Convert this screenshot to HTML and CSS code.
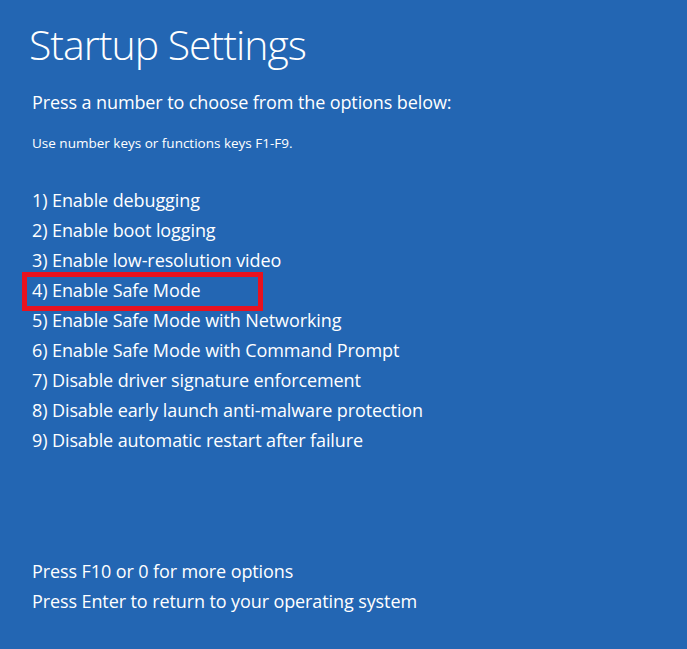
FILE: index.html
```html
<!DOCTYPE html>
<html lang="en">
<head>
  <meta charset="UTF-8">
  <title>Startup Settings</title>
  <link rel="stylesheet" href="styles.css">
</head>
<body>
  <div class="screen">
    <h1 class="title">Startup Settings</h1>
    <p class="lead">Press a number to choose from the options below:</p>
    <p class="hint">Use number keys or functions keys F1-F9.</p>

    <ul class="options">
      <li>1) Enable debugging</li>
      <li>2) Enable boot logging</li>
      <li>3) Enable low-resolution video</li>
      <li class="picked">4) Enable Safe Mode</li>
      <li>5) Enable Safe Mode with Networking</li>
      <li>6) Enable Safe Mode with Command Prompt</li>
      <li>7) Disable driver signature enforcement</li>
      <li>8) Disable early launch anti-malware protection</li>
      <li>9) Disable automatic restart after failure</li>
    </ul>

    <div class="footer">
      <p>Press F10 or 0 for more options</p>
      <p>Press Enter to return to your operating system</p>
    </div>
  </div>
</body>
</html>
```

FILE: styles.css
```css
*, *::before, *::after {
  box-sizing: border-box;
}

html, body {
  margin: 0;
  height: 100%;
}

body {
  background-color: #2366b3;
  color: #ffffff;
  font-family: "Open Sans", "Noto Sans", sans-serif;
}

.screen {
  padding: 18px 0 0 32px;
  display: flex;
  flex-direction: column;
}

.title {
  margin: 0 0 0 -3px;
  font-size: 41px;
  font-weight: 300;
  letter-spacing: -1px;
  line-height: 52px;
}

.lead {
  margin: 20px 0 0;
  font-size: 18px;
  letter-spacing: -0.1px;
  line-height: 24px;
}

.hint {
  margin: 21px 0 0;
  font-size: 13.5px;
  line-height: 16px;
}

.options {
  list-style: none;
  margin: 34px 0 0;
  padding: 0;
}

.options li {
  font-size: 18px;
  letter-spacing: -0.1px;
  line-height: 30px;
  position: relative;
}

/* red highlight round option 4 */
.options li.picked::after {
  content: "";
  position: absolute;
  left: -10px;
  top: -3px;
  width: 241px;
  height: 39px;
  border: 5px solid #e8121f;
  pointer-events: none;
}

.footer {
  margin-top: 101px;
}

.footer p {
  margin: 0;
  font-size: 18px;
  letter-spacing: -0.1px;
  line-height: 30px;
}
```
